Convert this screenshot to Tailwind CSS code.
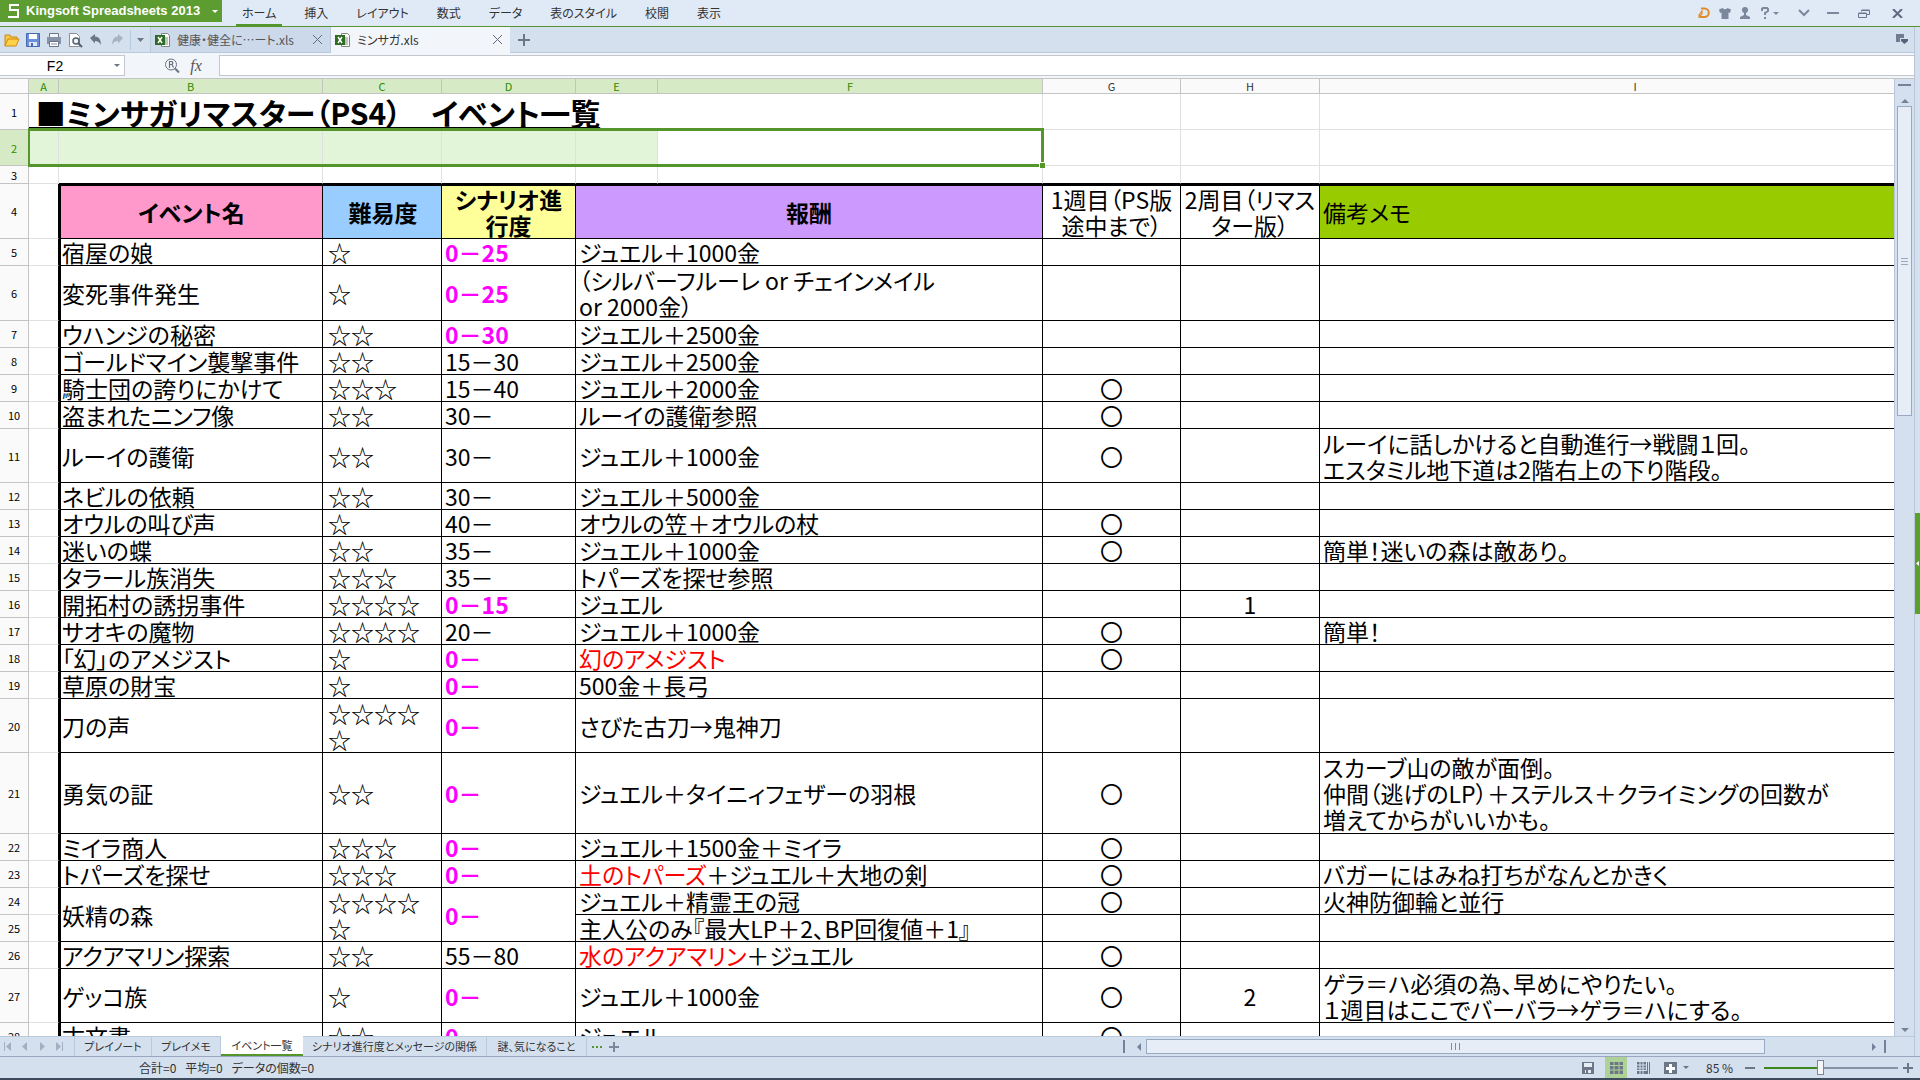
<!DOCTYPE html>
<html lang="ja">
<head>
<meta charset="utf-8">
<title>ミンサガ.xls - Kingsoft Spreadsheets 2013</title>
<script src="https://cdn.jsdelivr.net/npm/@tailwindcss/browser@4"></script>
</head>
<body class="flex h-screen flex-col overflow-hidden bg-[#d5e0ee] font-['Noto_Sans_CJK_JP',sans-serif] text-xs text-[#333] [font-feature-settings:'palt']">

<!-- Title bar and ribbon menu -->
<header class="flex h-[27px] shrink-0 items-start border-b border-[#55962c] bg-[#e0eaf6]">
  <button class="flex h-[22px] w-[222px] items-center bg-[#5c9c30] pl-2 text-white">
    <svg class="h-4 w-[11px]" viewBox="0 0 11 16" fill="none" stroke="#fff" stroke-width="2"><path d="M11 2H2v5h8v7H0"/></svg>
    <span class="ml-[7px] flex-1 text-left font-['Liberation_Sans',sans-serif] text-[13px] font-bold whitespace-nowrap">Kingsoft Spreadsheets 2013</span>
    <svg class="mr-1 h-[3px] w-[6px]" viewBox="0 0 6 3"><path d="M0 0h6L3 3z" fill="#fff"/></svg>
  </button>
  <nav class="ml-[14px] flex h-[26px] gap-4 leading-[26px] whitespace-nowrap [&_button]:px-[6px]">
    <button class="border-b-2 border-[#55962c] leading-[26px]">ホーム</button>
    <button>挿入</button><button>レイアウト</button><button>数式</button><button>データ</button><button>表のスタイル</button><button>校閲</button><button>表示</button>
  </nav>
  <div class="ml-auto flex h-[26px] items-center pr-[17px] text-[#7b879b]">
    <button aria-label="Docer"><svg class="h-3 w-3" viewBox="0 0 12 12" fill="none" stroke="#e08a2c" stroke-width="2"><path d="M3 1.500h3.500a4 4 0 010 8.500H2"/><path d="M1 11V8l3-4v3L1 10" stroke-width="1.200"/></svg></button>
    <button aria-label="スキン" class="ml-[9px]"><svg class="h-3 w-3" viewBox="0 0 12 12" fill="currentColor"><path d="M3.500 1Q6 3.500 8.500 1L12 2.500 11 6 9.500 5.500V12h-7V5.500L1 6 0 2.500z"/></svg></button>
    <button aria-label="アカウント" class="ml-2"><svg class="h-3 w-3" viewBox="0 0 12 12" fill="currentColor"><circle cx="6" cy="3" r="3"/><path d="M5 5h2v3l4 2v2H1v-2l4-2z"/></svg></button>
    <button aria-label="ヘルプ" class="ml-[10px] flex items-center gap-1"><svg class="h-3 w-2" viewBox="0 0 8 12" fill="none" stroke="currentColor" stroke-width="2"><path d="M1 4V2l1-1h4l1 1v2L4 6v2M4 10v2"/></svg><svg class="h-[3px] w-[6px]" viewBox="0 0 6 3"><path d="M0 0h6L3 3z" fill="currentColor"/></svg></button>
    <button aria-label="リボンを隠す" class="ml-[19px]"><svg class="h-2 w-3" viewBox="0 0 12 8" fill="none" stroke="currentColor" stroke-width="2"><path d="M1 1l5 5 5-5"/></svg></button>
    <button aria-label="最小化" class="ml-[17px]"><svg class="h-2 w-3" viewBox="0 0 12 8"><path d="M0 3h12v2H0z" fill="currentColor"/></svg></button>
    <button aria-label="元に戻す" class="ml-[19px]"><svg class="h-[9px] w-3" viewBox="0 0 12 9" fill="none" stroke="#6b778c"><path d="M3.500 2.500v-1h8v4H9M3.500 1h8M.5 4.500h8v4h-8zM.5 4h8"/></svg></button>
    <button aria-label="閉じる" class="ml-[22px]"><svg class="h-[9px] w-[11px]" viewBox="0 0 11 9" fill="none" stroke="#5f6b80" stroke-width="2"><path d="M1 0l9 9M10 0L1 9"/></svg></button>
  </div>
</header>

<div class="flex min-h-0 flex-1">
<div class="flex min-w-0 flex-1 flex-col">

<!-- Quick access tools and document tabs -->
<div class="flex h-[26px] shrink-0 items-center border-b border-[#b8cade] bg-[#d5e0ee]">
  <div class="flex h-full w-[150px] items-center gap-[5px] pl-1">
    <button aria-label="開く"><svg class="h-4 w-4" viewBox="0 0 16 16"><path d="M1 14V3h5l1 2h6v3" fill="#f5c648" stroke="#c98a10"/><path d="M1 14l3-7h11l-3 7z" fill="#ffd24a" stroke="#d08a10"/></svg></button>
    <button aria-label="保存"><svg class="h-4 w-4" viewBox="0 0 16 16"><path d="M1.500 1.500h13v13h-13z" fill="#6a8fd8" stroke="#4669b5"/><path d="M4 2h8v5H4z" fill="#fff"/><path d="M4 10h8v4H4z" fill="#dde6f8"/><path d="M6 11h2v3H6z" fill="#4669b5"/></svg></button>
    <button aria-label="印刷"><svg class="h-4 w-4" viewBox="0 0 16 16"><path d="M3.500 1.500h9v4h-9z" fill="#f5f7fa" stroke="#6a7686"/><path d="M1 5h14v7H1z" fill="#8592a8"/><path d="M3.500 9.500h9v5h-9z" fill="#fff" stroke="#6a7686"/><path d="M5 12h6" stroke="#8592a8"/></svg></button>
    <button aria-label="印刷プレビュー"><svg class="h-4 w-4" viewBox="0 0 16 16" fill="none"><path d="M2.500 1.500h7l3 3v10h-10z" fill="#fff" stroke="#8a8f98"/><circle cx="9" cy="9" r="3" fill="#eef3f8" stroke="#56606e" stroke-width="1.500"/><path d="M11 11l4 4" stroke="#56606e" stroke-width="2"/></svg></button>
    <button aria-label="元に戻す"><svg class="h-4 w-4" viewBox="0 0 16 16"><path d="M2 6l5-4v2.500q6 0 6 8.500-2-4-6-4v2.500z" fill="#6b7686"/></svg></button>
    <button aria-label="やり直し"><svg class="h-4 w-4" viewBox="0 0 16 16"><path d="M14 6L9 2v2.500q-6 0-6 8.500 2-4 6-4v2.500z" fill="#a9b3c1"/></svg></button>
    <span class="h-5 w-px bg-[#b8cade]"></span>
    <button aria-label="ツールのカスタマイズ"><svg class="ml-px h-1 w-[7px]" viewBox="0 0 7 4"><path d="M0 0h7L3.500 4z" fill="#6b7686"/></svg></button>
  </div>
  <div class="flex h-full w-[181px] items-center border-x border-[#b8cade] bg-[#ccd9ea] px-1">
    <svg class="h-4 w-4" viewBox="0 0 16 16"><path d="M6.500 1.500h6l2 2v11h-8z" fill="#fff" stroke="#7c8a7c"/><path d="M10 6h3M10 8h3M10 10h3M10 12h3" stroke="#7c8a7c"/><path d="M0 3h10v10H0z" fill="#2c6b20"/><path d="M3 5l4 6M7 5l-4 6" stroke="#fff" stroke-width="1.500"/></svg>
    <a href="#" class="ml-[6px] flex-1 whitespace-nowrap text-[#555]">健康・健全に…ート.xls</a>
    <button aria-label="閉じる"><svg class="mr-1 h-[9px] w-[9px]" viewBox="0 0 9 9" fill="none" stroke="#5f6b80"><path d="M0 0l9 9M9 0L0 9"/></svg></button>
  </div>
  <div class="flex h-[26px] w-[179px] items-center bg-[#f2f6fb] px-1">
    <svg class="h-4 w-4" viewBox="0 0 16 16"><path d="M6.500 1.500h6l2 2v11h-8z" fill="#fff" stroke="#7c8a7c"/><path d="M10 6h3M10 8h3M10 10h3M10 12h3" stroke="#7c8a7c"/><path d="M0 3h10v10H0z" fill="#2c6b20"/><path d="M3 5l4 6M7 5l-4 6" stroke="#fff" stroke-width="1.500"/></svg>
    <a href="#" class="ml-[6px] flex-1 whitespace-nowrap">ミンサガ.xls</a>
    <button aria-label="閉じる"><svg class="mr-1 h-[9px] w-[9px]" viewBox="0 0 9 9" fill="none" stroke="#5f6b80"><path d="M0 0l9 9M9 0L0 9"/></svg></button>
  </div>
  <button aria-label="新しいタブ" class="ml-2"><svg class="h-3 w-3" viewBox="0 0 12 12"><path d="M5 0h2v5h5v2H7v5H5V7H0V5h5z" fill="#6b7686"/></svg></button>
  <button aria-label="タブ一覧" class="mr-[6px] ml-auto"><svg class="h-[11px] w-3" viewBox="0 0 12 11"><path d="M0 0h8v4H4v4H0z" fill="#6f7c91"/><path d="M5 5h7v2L8.500 10 5 7z" fill="#56617a"/></svg></button>
</div>

<!-- Name box and formula bar -->
<div class="flex h-[26px] shrink-0 items-center border-b border-[#c4c4c4] bg-[#f2f6fb]">
  <label class="flex h-[21px] w-[125px] items-center border border-l-0 border-[#c4c8ce] bg-white">
    <input aria-label="名前ボックス" value="F2" class="w-[110px] text-center font-['Liberation_Sans',sans-serif] text-sm text-black outline-none">
    <svg class="ml-1 h-[3px] w-[6px]" viewBox="0 0 6 3"><path d="M0 0h6L3 3z" fill="#6b7686"/></svg>
  </label>
  <button aria-label="検索" class="ml-[39px]"><svg class="h-[15px] w-4" viewBox="0 0 16 15" fill="none" stroke="#6a7380"><circle cx="7" cy="6.500" r="5.500"/><path d="M5.500 10V3.500h2.500q1.500 1.500 0 3H6M8 6.500l1.500 3" stroke-width="1.200"/><path d="M11 10.500l4 4" stroke-width="2"/></svg></button>
  <button class="ml-[8px] w-4 font-['Liberation_Serif',serif] text-base leading-5 italic text-[#555]">fx</button>
  <input aria-label="数式バー" class="ml-[15px] h-[21px] min-w-0 flex-1 border border-r-0 border-[#c4c8ce] bg-white px-1 outline-none">
</div>

<div class="flex min-h-0 flex-1">
<main class="relative min-w-0 flex-1 overflow-hidden bg-white">
<table class="w-full table-fixed border-separate border-spacing-0 text-[23px] leading-[26px] text-black [&_th]:border-r [&_th]:border-b [&_th]:border-[#c4c4c4] [&_th]:p-0 [&_th]:text-[11px] [&_th]:leading-[14px] [&_th]:font-normal">
  <colgroup><col class="w-[29px]"><col class="w-[30px]"><col class="w-[264px]"><col class="w-[119px]"><col class="w-[134px]"><col class="w-[82px]"><col class="w-[385px]"><col class="w-[138px]"><col class="w-[139px]"><col></colgroup>
  <thead class="bg-[#fafafa] text-[#333]">
    <tr class="h-[15px]"><th></th><th class="bg-[#d6ebc5] text-[#2c8a00]">A</th><th class="bg-[#d6ebc5] text-[#2c8a00]">B</th><th class="bg-[#d6ebc5] text-[#2c8a00]">C</th><th class="bg-[#d6ebc5] text-[#2c8a00]">D</th><th class="bg-[#d6ebc5] text-[#2c8a00]">E</th><th class="bg-[#d6ebc5] text-[#2c8a00]">F</th><th>G</th><th>H</th><th class="border-r-0! pl-14!">I</th></tr>
  </thead>
  <tbody class="[&_td]:border-r [&_td]:border-b [&_td]:border-[#e0e0e0] [&_td]:p-0 [&_th]:bg-[#fafafa]">
    <tr class="h-9"><th>1</th><td colspan="5" class="whitespace-nowrap border-r-0!"><h1 class="text-[30px] leading-[34px] font-bold"><span class="underline decoration-2 underline-offset-2">&nbsp;■ミンサガリマスター（PS4）　イベント一覧</span></h1></td><td></td><td></td><td></td><td class="border-r-0!"></td></tr>
    <tr class="h-9 [&_td]:bg-[#e2f5d8]"><th class="bg-[#d6ebc5]! text-[#2c8a00]">2</th><td></td><td></td><td></td><td></td><td></td><td class="bg-white!"></td><td class="bg-white!"></td><td class="bg-white!"></td><td class="border-r-0! bg-white!"></td></tr>
    <tr class="h-[18px]"><th>3</th><td></td><td class="border-b-black!"></td><td class="border-b-black!"></td><td class="border-b-black!"></td><td class="border-b-black!"></td><td class="border-b-black!"></td><td class="border-b-black!"></td><td class="border-b-black!"></td><td class="border-r-0! border-b-black!"></td></tr>
  </tbody>
  <tbody class="[&_td]:border-r [&_td]:border-b [&_td]:border-black [&_td]:px-[3px] [&_td]:py-0 [&_td.border-l-2]:px-px [&_td.border-l-2+td]:pl-[5px] [&_th]:bg-[#fafafa]">
    <tr class="h-[55px] text-center"><th>4</th><td class="border-b-[#e0e0e0]!"></td><td class="border-t-2 border-l-2 bg-[#ff99cc] font-bold">イベント名</td><td class="border-t-2 bg-[#99ccff] font-bold">難易度</td><td class="border-t-2 bg-[#ffff99] font-bold">シナリオ進<br>行度</td><td colspan="2" class="border-t-2 bg-[#cc99ff] font-bold">報酬</td><td class="border-t-2 whitespace-nowrap">1週目（PS版<br>途中まで）</td><td class="border-t-2 whitespace-nowrap">2周目（リマス<br>ター版）</td><td class="border-t-2 border-r-0! bg-[#99cc00] text-left">備考メモ</td></tr>
    <tr class="h-[27px]"><th>5</th><td class="border-b-[#e0e0e0]!"></td><td class="border-l-2">宿屋の娘</td><td>☆</td><td class="font-bold text-[#ff00ff]">0－25</td><td colspan="2">ジュエル＋1000金</td><td></td><td></td><td class="border-r-0!"></td></tr>
    <tr class="h-[55px]"><th>6</th><td class="border-b-[#e0e0e0]!"></td><td class="border-l-2">変死事件発生</td><td>☆</td><td class="font-bold text-[#ff00ff]">0－25</td><td colspan="2">（シルバーフルーレ or チェインメイル<br>or 2000金）</td><td></td><td></td><td class="border-r-0!"></td></tr>
    <tr class="h-[27px]"><th>7</th><td class="border-b-[#e0e0e0]!"></td><td class="border-l-2">ウハンジの秘密</td><td>☆☆</td><td class="font-bold text-[#ff00ff]">0－30</td><td colspan="2">ジュエル＋2500金</td><td></td><td></td><td class="border-r-0!"></td></tr>
    <tr class="h-[27px]"><th>8</th><td class="border-b-[#e0e0e0]!"></td><td class="border-l-2">ゴールドマイン襲撃事件</td><td>☆☆</td><td>15－30</td><td colspan="2">ジュエル＋2500金</td><td></td><td></td><td class="border-r-0!"></td></tr>
    <tr class="h-[27px]"><th>9</th><td class="border-b-[#e0e0e0]!"></td><td class="border-l-2">騎士団の誇りにかけて</td><td>☆☆☆</td><td>15－40</td><td colspan="2">ジュエル＋2000金</td><td class="text-center">〇</td><td></td><td class="border-r-0!"></td></tr>
    <tr class="h-[27px]"><th>10</th><td class="border-b-[#e0e0e0]!"></td><td class="border-l-2">盗まれたニンフ像</td><td>☆☆</td><td>30－</td><td colspan="2">ルーイの護衛参照</td><td class="text-center">〇</td><td></td><td class="border-r-0!"></td></tr>
    <tr class="h-[54px]"><th>11</th><td class="border-b-[#e0e0e0]!"></td><td class="border-l-2">ルーイの護衛</td><td>☆☆</td><td>30－</td><td colspan="2">ジュエル＋1000金</td><td class="text-center">〇</td><td></td><td class="border-r-0!">ルーイに話しかけると自動進行→戦闘１回。<br>エスタミル地下道は2階右上の下り階段。</td></tr>
    <tr class="h-[27px]"><th>12</th><td class="border-b-[#e0e0e0]!"></td><td class="border-l-2">ネビルの依頼</td><td>☆☆</td><td>30－</td><td colspan="2">ジュエル＋5000金</td><td></td><td></td><td class="border-r-0!"></td></tr>
    <tr class="h-[27px]"><th>13</th><td class="border-b-[#e0e0e0]!"></td><td class="border-l-2">オウルの叫び声</td><td>☆</td><td>40－</td><td colspan="2">オウルの笠＋オウルの杖</td><td class="text-center">〇</td><td></td><td class="border-r-0!"></td></tr>
    <tr class="h-[27px]"><th>14</th><td class="border-b-[#e0e0e0]!"></td><td class="border-l-2">迷いの蝶</td><td>☆☆</td><td>35－</td><td colspan="2">ジュエル＋1000金</td><td class="text-center">〇</td><td></td><td class="border-r-0!">簡単！迷いの森は敵あり。</td></tr>
    <tr class="h-[27px]"><th>15</th><td class="border-b-[#e0e0e0]!"></td><td class="border-l-2">タラール族消失</td><td>☆☆☆</td><td>35－</td><td colspan="2">トパーズを探せ参照</td><td></td><td></td><td class="border-r-0!"></td></tr>
    <tr class="h-[27px]"><th>16</th><td class="border-b-[#e0e0e0]!"></td><td class="border-l-2">開拓村の誘拐事件</td><td>☆☆☆☆</td><td class="font-bold text-[#ff00ff]">0－15</td><td colspan="2">ジュエル</td><td></td><td class="text-center">1</td><td class="border-r-0!"></td></tr>
    <tr class="h-[27px]"><th>17</th><td class="border-b-[#e0e0e0]!"></td><td class="border-l-2">サオキの魔物</td><td>☆☆☆☆</td><td>20－</td><td colspan="2">ジュエル＋1000金</td><td class="text-center">〇</td><td></td><td class="border-r-0!">簡単！</td></tr>
    <tr class="h-[27px]"><th>18</th><td class="border-b-[#e0e0e0]!"></td><td class="border-l-2">「幻」のアメジスト</td><td>☆</td><td class="font-bold text-[#ff00ff]">0－</td><td colspan="2"><span class="text-[#ff0000]">幻のアメジスト</span></td><td class="text-center">〇</td><td></td><td class="border-r-0!"></td></tr>
    <tr class="h-[27px]"><th>19</th><td class="border-b-[#e0e0e0]!"></td><td class="border-l-2">草原の財宝</td><td>☆</td><td class="font-bold text-[#ff00ff]">0－</td><td colspan="2">500金＋長弓</td><td></td><td></td><td class="border-r-0!"></td></tr>
    <tr class="h-[54px]"><th>20</th><td class="border-b-[#e0e0e0]!"></td><td class="border-l-2">刀の声</td><td>☆☆☆☆<br>☆</td><td class="font-bold text-[#ff00ff]">0－</td><td colspan="2">さびた古刀→鬼神刀</td><td></td><td></td><td class="border-r-0!"></td></tr>
    <tr class="h-[81px]"><th>21</th><td class="border-b-[#e0e0e0]!"></td><td class="border-l-2">勇気の証</td><td>☆☆</td><td class="font-bold text-[#ff00ff]">0－</td><td colspan="2">ジュエル＋タイニィフェザーの羽根</td><td class="text-center">〇</td><td></td><td class="border-r-0!">スカーブ山の敵が面倒。<br>仲間（逃げのLP）＋ステルス＋クライミングの回数が<br>増えてからがいいかも。</td></tr>
    <tr class="h-[27px]"><th>22</th><td class="border-b-[#e0e0e0]!"></td><td class="border-l-2">ミイラ商人</td><td>☆☆☆</td><td class="font-bold text-[#ff00ff]">0－</td><td colspan="2">ジュエル＋1500金＋ミイラ</td><td class="text-center">〇</td><td></td><td class="border-r-0!"></td></tr>
    <tr class="h-[27px]"><th>23</th><td class="border-b-[#e0e0e0]!"></td><td class="border-l-2">トパーズを探せ</td><td>☆☆☆</td><td class="font-bold text-[#ff00ff]">0－</td><td colspan="2"><span class="text-[#ff0000]">土のトパーズ</span>＋ジュエル＋大地の剣</td><td class="text-center">〇</td><td></td><td class="border-r-0!">バガーにはみね打ちがなんとかきく</td></tr>
    <tr class="h-[27px]"><th>24</th><td class="border-b-[#e0e0e0]!"></td><td rowspan="2" class="border-l-2">妖精の森</td><td rowspan="2">☆☆☆☆<br>☆</td><td rowspan="2" class="font-bold text-[#ff00ff]">0－</td><td colspan="2">ジュエル＋精霊王の冠</td><td class="text-center">〇</td><td></td><td class="border-r-0!">火神防御輪と並行</td></tr>
    <tr class="h-[27px]"><th>25</th><td class="border-b-[#e0e0e0]!"></td><td colspan="2">主人公のみ『最大LP＋2、BP回復値＋1』</td><td></td><td></td><td class="border-r-0!"></td></tr>
    <tr class="h-[27px]"><th>26</th><td class="border-b-[#e0e0e0]!"></td><td class="border-l-2">アクアマリン探索</td><td>☆☆</td><td>55－80</td><td colspan="2"><span class="text-[#ff0000]">水のアクアマリン</span>＋ジュエル</td><td class="text-center">〇</td><td></td><td class="border-r-0!"></td></tr>
    <tr class="h-[54px]"><th>27</th><td class="border-b-[#e0e0e0]!"></td><td class="border-l-2">ゲッコ族</td><td>☆</td><td class="font-bold text-[#ff00ff]">0－</td><td colspan="2">ジュエル＋1000金</td><td class="text-center">〇</td><td class="text-center">2</td><td class="border-r-0!">ゲラ＝ハ必須の為、早めにやりたい。<br>１週目はここでバーバラ→ゲラ＝ハにする。</td></tr>
    <tr class="h-[27px]"><th>28</th><td class="border-b-[#e0e0e0]!"></td><td class="border-l-2">古文書</td><td>☆☆</td><td class="font-bold text-[#ff00ff]">0－</td><td colspan="2">ジュエル</td><td class="text-center">〇</td><td></td><td class="border-r-0!"></td></tr>
  </tbody>
</table>
<!-- Selected range outline with its fill handle -->
<div class="pointer-events-none absolute top-[49px] left-[28px] h-[39px] w-[1016px] border-[3px] border-l-2 border-[#55962c]"><span class="absolute -right-[4px] -bottom-[4px] size-[6px] border-t border-l border-white bg-[#55962c]"></span></div>
</main>

<!-- Vertical scroll bar -->
<div class="flex w-5 shrink-0 flex-col items-center border-l border-[#b8c6dc] bg-[#d5e0ee]">
  <span class="mt-[5px] h-[2px] w-[13px] bg-[#76829a]"></span>
  <button aria-label="上へ" class="mt-[13px]"><svg class="h-1 w-2" viewBox="0 0 8 4"><path d="M0 4h8L4 0z" fill="#76829a"/></svg></button>
  <div class="mt-[3px] flex h-[310px] w-[15px] flex-col items-center justify-center gap-[2px] border border-[#9aa9c2] bg-[#e6edf7]"><span class="h-px w-[7px] bg-[#9aa9c2]"></span><span class="h-px w-[7px] bg-[#9aa9c2]"></span><span class="h-px w-[7px] bg-[#9aa9c2]"></span></div>
  <button aria-label="下へ" class="mt-auto mb-1"><svg class="h-1 w-2" viewBox="0 0 8 4"><path d="M0 0h8L4 4z" fill="#76829a"/></svg></button>
</div>
</div>

<!-- Sheet tabs and horizontal scroll bar -->
<div class="flex h-5 shrink-0 items-center border-t border-[#b8cade]">
  <div class="flex h-full w-[75px] items-center gap-[9px] border-r border-[#b8cade] pl-1 text-[#a3afc2]">
    <button aria-label="最初のシート"><svg class="h-[9px] w-2" viewBox="0 0 8 9" fill="currentColor"><path d="M0 0h1v9H0zM7 0v9L2 4.500z"/></svg></button>
    <button aria-label="前のシート"><svg class="h-[9px] w-2" viewBox="0 0 8 9" fill="currentColor"><path d="M6 0v9L1 4.500z"/></svg></button>
    <button aria-label="次のシート"><svg class="h-[9px] w-2" viewBox="0 0 8 9" fill="currentColor"><path d="M2 0v9l5-4.500z"/></svg></button>
    <button aria-label="最後のシート"><svg class="h-[9px] w-2" viewBox="0 0 8 9" fill="currentColor"><path d="M7 0h1v9H7zM1 0v9l5-4.500z"/></svg></button>
  </div>
  <nav class="flex h-full text-[11px] leading-[19px] whitespace-nowrap">
    <button class="w-[77px] border-r border-[#b8cade]">プレイノート</button>
    <button class="w-[69px] border-r border-[#b8cade]">プレイメモ</button>
    <button class="-mt-px h-5 w-[82px] border-b-2 border-[#55962c] bg-white">イベント一覧</button>
    <button class="w-[184px] border-r border-[#b8cade]">シナリオ進行度とメッセージの関係</button>
    <button class="w-[100px] border-r border-[#b8cade]">謎、気になること</button>
  </nav>
  <button aria-label="その他のシート" class="ml-[5px]"><svg class="h-[2px] w-[10px]" viewBox="0 0 10 2"><path d="M0 0h2v2H0zM4 0h2v2H4zM8 0h2v2H8z" fill="#55962c"/></svg></button>
  <button aria-label="シートの追加" class="ml-[7px]"><svg class="h-[10px] w-[10px]" viewBox="0 0 10 10"><path d="M4 0h2v4h4v2H6v4H4V6H0V4h4z" fill="#7b879b"/></svg></button>
  <div class="ml-auto flex w-[791px] items-center">
    <span class="h-[13px] w-[2px] bg-[#76829a]"></span>
    <button aria-label="左へ" class="ml-3"><svg class="h-2 w-1" viewBox="0 0 4 8"><path d="M4 0v8L0 4z" fill="#76829a"/></svg></button>
    <div class="ml-[5px] flex h-[15px] w-[619px] items-center justify-center gap-[3px] border border-[#9aa9c2] bg-[#e6edf7]"><span class="h-[7px] w-px bg-[#7b8cab]"></span><span class="h-[7px] w-px bg-[#7b8cab]"></span><span class="h-[7px] w-px bg-[#7b8cab]"></span></div>
    <button aria-label="右へ" class="ml-auto"><svg class="h-2 w-1" viewBox="0 0 4 8"><path d="M0 0v8l4-4z" fill="#76829a"/></svg></button>
    <span class="mr-[28px] ml-2 h-[13px] w-[2px] bg-[#76829a]"></span>
  </div>
</div>
</div>

<!-- Task pane handle -->
<aside class="flex w-[6px] shrink-0 flex-col border-l border-[#b8c6dc] pt-[486px]">
  <button aria-label="作業ウィンドウを開く" class="flex h-[101px] items-center justify-center bg-[#5aa02c]"><svg class="h-[5px] w-[3px]" viewBox="0 0 3 5"><path d="M3 0v5L0 2.500z" fill="#fff"/></svg></button>
</aside>
</div>

<!-- Status bar -->
<footer class="flex h-6 shrink-0 items-center border-t border-b-2 border-t-[#9aa5c0] border-b-[#3c4a5c] pr-[7px] pl-[139px]">
  <p class="flex gap-[9px] whitespace-nowrap"><span>合計=0</span><span>平均=0</span><span>データの個数=0</span></p>
  <div class="ml-auto flex h-full items-center text-[#6b7686]">
    <button aria-label="保存状態"><svg class="h-3 w-3" viewBox="0 0 12 12"><path d="M0 0h12v12H0z" fill="currentColor"/><path d="M2 1h8v4H2zM3 8h6v3H3z" fill="#e6ecf4"/><path d="M4 8h2v3H4z" fill="currentColor"/></svg></button>
    <button aria-label="標準" class="ml-[11px] flex h-full w-[22px] items-center justify-center bg-[#aed198]"><svg class="h-3 w-[13px]" viewBox="0 0 13 12"><path d="M0 0h13v12H0z" fill="currentColor"/><path d="M4 0v12M9 0v12M0 3.500h13M0 8h13" stroke="#aed198"/></svg></button>
    <button aria-label="改ページ" class="ml-[10px]"><svg class="h-3 w-[13px]" viewBox="0 0 13 12"><path d="M0 0h9v8H0zM10 0h3v12H0V9h10z" fill="currentColor"/><path d="M3 0v12M6 0v12M0 3h9M0 6h9M11.500 0v12" stroke="#d5e0ee"/></svg></button>
    <button aria-label="読み取りモード" class="ml-[14px] flex items-center gap-[6px]"><svg class="h-3 w-[13px]" viewBox="0 0 13 12"><path d="M0 0h13v12H0z" fill="currentColor"/><path d="M5 2h3v3h3v3H8v3H5V8H2V5h3z" fill="#fff"/></svg><svg class="h-[3px] w-[6px]" viewBox="0 0 6 3"><path d="M0 0h6L3 3z" fill="currentColor"/></svg></button>
    <label for="zoom" class="ml-[17px] w-[39px] whitespace-nowrap text-[#333]">85 %</label>
    <button aria-label="縮小"><svg class="h-[10px] w-[10px]" viewBox="0 0 10 10"><path d="M0 4h10v2H0z" fill="currentColor"/></svg></button>
    <input id="zoom" type="range" min="0" max="100" value="42" class="ml-[9px] h-4 w-[134px] appearance-none bg-[linear-gradient(to_right,#3f861c_56px,#8793a5_56px)] bg-[length:100%_2px] bg-center bg-no-repeat [&::-webkit-slider-thumb]:h-[15px] [&::-webkit-slider-thumb]:w-[7px] [&::-webkit-slider-thumb]:appearance-none [&::-webkit-slider-thumb]:border [&::-webkit-slider-thumb]:border-solid [&::-webkit-slider-thumb]:border-[#7b879b] [&::-webkit-slider-thumb]:bg-[#f4f6f9]">
    <button aria-label="拡大" class="ml-[5px]"><svg class="h-[10px] w-[10px]" viewBox="0 0 10 10"><path d="M4 0h2v4h4v2H6v4H4V6H0V4h4z" fill="currentColor"/></svg></button>
  </div>
</footer>
</body>
</html>
